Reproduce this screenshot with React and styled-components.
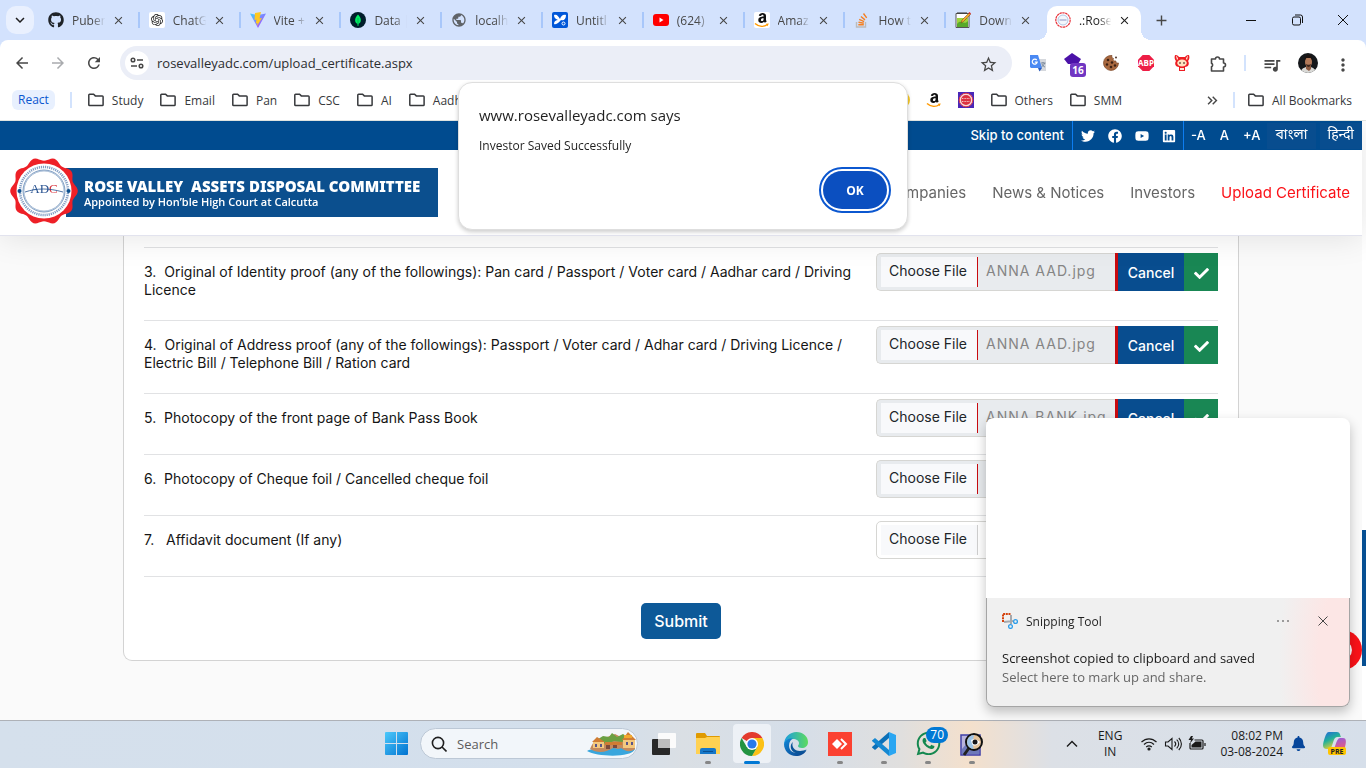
import React from "react";
import styled, { createGlobalStyle, css } from "styled-components";
import { FaGithub, FaTwitter, FaFacebook, FaYoutube, FaLinkedin, FaWhatsapp, FaCheck, FaBell } from "react-icons/fa";
import { SiOpenai } from "react-icons/si";
import { MdArrowBack, MdArrowForward, MdRefresh, MdStarBorder, MdQueueMusic, MdMoreVert, MdPublic, MdClose, MdAdd, MdKeyboardArrowDown, MdOutlineKeyboardDoubleArrowRight } from "react-icons/md";

const uiFont = '"Open Sans", "Noto Sans", sans-serif';
const siteFont = 'Inter, "Open Sans", "Noto Sans", sans-serif';

const GlobalStyle = createGlobalStyle`
  *, *::before, *::after { box-sizing: border-box; }
  body { margin: 0; overflow: hidden; font-family: ${uiFont}; font-size: 12px; color: #1f1f1f; }
  button { border: 0; padding: 0; background: none; font: inherit; color: inherit; }
  button, label, a { cursor: pointer; }
  a { color: inherit; text-decoration: none; }
  h1, h2, p { margin: 0; font-weight: 400; }
  svg { display: block; flex: none; }
`;

const Screen = styled.div`
  position: relative;
  height: 100vh;
  display: grid;
  grid-template-rows: 40px 46px 35px minmax(0, 1fr) 48px;
  background: #d3e2fd;
`;

/* Browser chrome */
const TabStrip = styled.header`
  display: flex;
  align-items: flex-end;
`;
const TabSearch = styled.button`
  width: 28px;
  height: 28px;
  margin: 0 0 6px 6px;
  border-radius: 10px;
  background: #e9f0fe;
  display: grid;
  place-items: center;
`;
const TabList = styled.nav`
  display: flex;
  flex: 0 1 1108px;
  min-width: 0;
  margin-left: 5px;
  height: 34px;
`;
const Tab = styled.div`
  position: relative;
  flex: 1 1 0;
  min-width: 0;
  display: flex;
  align-items: center;
  padding: 0 15px 6px 9px;
  color: #474747;
  ${(p) => p.$active ? css`
    background: #fff;
    color: #1f1f1f;
    border-radius: 10px 10px 0 0;
    flex: 0 0 94px;
    margin: 0 6px 0 0;
    padding: 0 10px 6px 8px;
    &::before, &::after {
      content: "";
      position: absolute;
      bottom: 0;
      width: 10px;
      height: 10px;
    }
    &::before { left: -10px; background: radial-gradient(circle at 0 0, transparent 10px, #fff 10px); }
    &::after { right: -10px; background: radial-gradient(circle at 100% 0, transparent 10px, #fff 10px); }
  ` : css`
    &::after {
      content: "";
      position: absolute;
      right: 0;
      top: 6px;
      width: 2px;
      height: 16px;
      background: ${p.$last ? "transparent" : "#a8c7fa"};
    }
  `}
`;
const TabTitle = styled.span`
  flex: 1;
  min-width: 0;
  margin: 0 6px 0 8px;
  white-space: nowrap;
  mask-image: linear-gradient(90deg, #000 60%, transparent 98%);
`;
const IconButton = styled.button`
  display: grid;
  place-items: center;
  min-width: ${(p) => p.$w || 16}px;
  height: ${(p) => p.$h || 16}px;
  color: ${(p) => p.$color || "#474747"};
`;
const NewTab = styled(IconButton)`
  margin: 0 0 6px 6px;
`;
const WindowButtons = styled.div`
  display: flex;
  margin-left: auto;
`;

const Toolbar = styled.div`
  display: flex;
  align-items: center;
  padding: 0 6px 0 4px;
  border-radius: 8px 8px 0 0;
  background: #fff;
`;
const AddressBar = styled.form`
  flex: 1;
  display: flex;
  align-items: center;
  height: 34px;
  margin: 0 8px;
  padding: 0 14px 0 5px;
  border-radius: 17px;
  background: #ebeef7;
`;
const SiteInfo = styled(IconButton)`
  border-radius: 50%;
  background: #fff;
`;
const AddressInput = styled.input`
  flex: 1;
  min-width: 0;
  margin: 0 8px;
  padding: 0;
  border: 0;
  outline: 0;
  background: none;
  font: 13px ${uiFont};
  color: #2b2d30;
`;
const Extensions = styled.div`
  display: flex;
  align-items: center;
`;
const Divider = styled.span`
  width: 2px;
  height: 16px;
  margin: ${(p) => p.$m};
  background: #d3e3fd;
`;
const Avatar = styled.span`
  width: 20px;
  height: 20px;
  border-radius: 50%;
  overflow: hidden;
`;

const BookmarkBar = styled.nav`
  display: flex;
  align-items: center;
  padding: 0 14px 6px 12px;
  background: #fff;
  border-bottom: 1px solid #dfe3e0;
  height: 35px;
`;
const Bookmark = styled.a`
  display: flex;
  align-items: center;
  gap: 7px;
  margin-right: ${(p) => p.$gap ?? 16}px;
  white-space: nowrap;
  color: #37393c;
`;
const BookmarkGroup = styled.a`
  padding: 1px 6px 2px;
  border-radius: 6px;
  background: #e8f0fe;
  color: #0b57d0;
`;
const BookmarkEnd = styled.div`
  display: flex;
  align-items: center;
  margin-left: auto;
`;

/* Website */
const Viewport = styled.main`
  display: flex;
  min-height: 0;
  overflow: hidden;
  background: #fafafa;
  font-family: ${siteFont};
`;
const Site = styled.div`
  position: relative;
  flex: 1;
  min-width: 0;
`;
const ScrollTrack = styled.div`
  display: grid;
  grid-template-rows: 409fr 136fr 54fr;
  width: 4px;
  background: #fff;
`;
const ScrollThumb = styled.div`
  grid-row: 2;
  background: #064f92;
`;
const SiteHeader = styled.header`
  position: relative;
  z-index: 1;
  background: #fff;
  border-bottom: 1px solid #e2e3ee;
  box-shadow: 0 2px 30px rgba(0, 0, 0, 0.1);
`;
const TopBar = styled.div`
  display: flex;
  justify-content: flex-end;
  align-items: stretch;
  height: 29px;
  background: #004b8f;
  color: #fff;
  font-size: 13px;
  font-weight: 500;
  line-height: 27px;
`;
const TopGroup = styled.div`
  display: flex;
  align-items: center;
  gap: ${(p) => p.$gap}px;
  padding: ${(p) => p.$pad};
  border-left: ${(p) => (p.$line ? "1px solid #0d7df0" : "0")};
`;
const Language = styled.a`
  padding: 0 8px;
  line-height: 26px;
  font-size: 14px;
  font-weight: 400;
  font-family: "Noto Sans Devanagari", "Noto Sans Bengali", "Noto Sans", sans-serif;
  background: #084d8f;
`;
const MainNav = styled.nav`
  display: flex;
  align-items: center;
  justify-content: space-between;
  height: 85px;
  padding: 0 12px 0 10px;
`;
const Brand = styled.a`
  display: flex;
  align-items: center;
`;
const BrandBanner = styled.span`
  display: flex;
  flex-direction: column;
  justify-content: center;
  width: 372px;
  height: 49px;
  margin-left: -12px;
  padding-left: 18px;
  background: #0b4f8e;
  color: #fff;
  white-space: pre;
`;
const BrandTitle = styled.strong`
  font: 900 15px/18px "Noto Sans", sans-serif;
`;
const BrandSub = styled.span`
  font: 600 11px/14px "Open Sans", sans-serif;
`;
const Seal = styled.svg`
  position: relative;
  overflow: visible;
`;
const NavLinks = styled.div`
  display: flex;
  gap: 26px;
  padding-bottom: 1px;
  font-size: 15px;
  color: #666;
  white-space: nowrap;
`;
const NavLink = styled.a`
  color: ${(p) => (p.$active ? "#fb1218" : "inherit")};
`;

const Card = styled.form`
  margin: 0 123px;
  padding: 11px 20px 21px;
  border: 1px solid #d3d3d3;
  border-top: 0;
  border-radius: 0 0 9px 9px;
  background: #fff;
`;
const DocRow = styled.div`
  display: grid;
  grid-template-columns: minmax(0, 1fr) 342px;
  column-gap: 16px;
  align-items: start;
  min-height: 61px;
  border-top: 1px solid #e1e2e4;
`;
const DocLabel = styled.label`
  padding: 15px 0 21px;
  font-size: 14px;
  line-height: 18px;
  color: #151515;
  white-space: pre-wrap;
`;
const Upload = styled.div`
  display: flex;
  height: 38px;
  margin-top: 5px;
`;
const FileField = styled.label`
  position: relative;
  display: flex;
  flex: 1;
  min-width: 0;
  padding: 3px 4px;
  border: 1px solid #d6d6d3;
  border-right: ${(p) => (p.$filled ? "0" : "1px solid #d6d6d3")};
  border-radius: 5px ${(p) => (p.$filled ? "0 0" : "5px 5px")} 5px;
  background: ${(p) => (p.$filled ? "#e8ebee" : "#fff")};
  font-size: 14px;
  line-height: 28px;
`;
const HiddenFile = styled.input`
  position: absolute;
  inset: 0;
  width: 100%;
  opacity: 0;
`;
const FileButton = styled.span`
  width: 97px;
  padding-left: 8px;
  border-right: 1px solid ${(p) => (p.$filled ? "#c90b10" : "#d0d0d0")};
  background: #f8f9fb;
  color: #212529;
`;
const FileName = styled.span`
  padding-left: 8px;
  color: #858585;
  letter-spacing: 1px;
`;
const CancelButton = styled.button`
  width: 69px;
  border-left: 3px solid #c90b10;
  background: #084d8f;
  color: #fff;
  font-size: 14px;
  font-weight: 500;
`;
const Done = styled.span`
  display: grid;
  place-items: center;
  width: 34px;
  padding-top: 2px;
  background: #198754;
  color: #fff;
`;
const SubmitArea = styled.div`
  display: flex;
  justify-content: center;
  padding-top: 26px;
  border-top: 1px solid #e1e2e4;
`;
const Submit = styled.button`
  width: 80px;
  height: 36px;
  border-radius: 5px;
  background: #0d5998;
  color: #fff;
  font-size: 16px;
  font-weight: 500;
`;
const BackToTop = styled.button`
  position: absolute;
  right: 0;
  bottom: 50px;
  width: 40px;
  height: 40px;
  border-radius: 50%;
  background: #fb1218;
  color: #fff;
  display: grid;
  place-items: center;
`;

/* Overlays */
const AlertBox = styled.section`
  position: absolute;
  z-index: 3;
  top: 82px;
  left: 50%;
  width: 450px;
  height: 148px;
  margin-left: -225px;
  padding: 21px 17px 17px 20px;
  border: 1px solid #dedede;
  border-radius: 14px;
  background: #fff;
  box-shadow: 0 2px 4px rgba(0, 0, 0, 0.2);
  display: flex;
  flex-direction: column;
`;
const AlertTitle = styled.h2`
  font-size: 15px;
  font-weight: 500;
  line-height: 22px;
`;
const AlertText = styled.p`
  margin-top: 11px;
  line-height: 18px;
`;
const OkButton = styled.button`
  align-self: flex-end;
  width: 64px;
  height: 38px;
  margin: 16px 3px 0 0;
  border-radius: 19px;
  background: #0b4fc0;
  color: #fff;
  font-weight: 700;
  outline: 2px solid #0b57d0;
  outline-offset: 2px;
`;
const Toast = styled.aside`
  position: absolute;
  z-index: 3;
  right: 16px;
  bottom: 61px;
  width: 364px;
  border-radius: 8px;
  background: #fff;
  box-shadow: 0 5px 12px rgba(0, 0, 0, 0.24);
`;
const ToastPreview = styled.div`
  height: 180px;
`;
const ToastBody = styled.div`
  height: 109px;
  padding: 13px 15px;
  border: 1px solid #a5a5a5;
  border-top: 0;
  border-radius: 0 0 8px 8px;
  background: radial-gradient(ellipse 70px 180px at 100% 60%, #fce6e5 45%, #f0f0f0 100%);
`;
const ToastHead = styled.div`
  display: flex;
  align-items: center;
  gap: 8px;
  height: 20px;
  margin-bottom: 18px;
`;
const ToastActions = styled.div`
  display: flex;
  gap: 24px;
  margin-left: auto;
  padding-right: 3px;
`;
const ToastText = styled.p`
  font-size: 13px;
  line-height: 19px;
  color: ${(p) => (p.$muted ? "#666" : "#1b1b1b")};
`;

/* Taskbar */
const Taskbar = styled.footer`
  position: relative;
  z-index: 2;
  display: grid;
  grid-template-columns: 1fr auto 1fr;
  align-items: center;
  padding-bottom: 2px;
  border-top: 1px solid #aeb1b7;
  background: linear-gradient(90deg, #d5e0ec 0%, #d3dfec 44%, #dadfe4 50%, #d5dee9 58%, #e0dfde 66%, #f4e0cc 71%, #dce0e6 77%, #d6dfea 100%);
`;
const Apps = styled.div`
  grid-column: 2;
  display: flex;
  align-items: center;
`;
const AppButton = styled.button`
  position: relative;
  width: ${(p) => (p.$start ? 48 : 44)}px;
  height: 45px;
  display: grid;
  place-items: center;
  ${(p) => p.$state && css`
    &::after {
      content: "";
      position: absolute;
      z-index: 1;
      bottom: 2px;
      width: ${p.$state === "active" ? 16 : 6}px;
      height: 3px;
      border-radius: 2px;
      background: ${p.$state === "active" ? "#0078d4" : "#868686"};
    }
  `}
  ${(p) => p.$state === "active" && css`
    &::before {
      content: "";
      position: absolute;
      inset: 3px;
      border-radius: 4px;
      background: #edf1f6;
    }
  `}
  svg { position: relative; z-index: 1; }
`;
const Count = styled.span`
  position: absolute;
  z-index: 2;
  top: 6px;
  right: 2px;
  padding: 0 4px;
  border-radius: 8px;
  background: #0078d4;
  color: #fff;
  line-height: 16px;
`;
const SearchBox = styled.label`
  display: flex;
  align-items: center;
  width: 218px;
  height: 31px;
  margin-right: 4px;
  padding: 0 0 0 10px;
  border: 1px solid #bcc8d6;
  border-radius: 16px;
  background: #f2f6fa;
`;
const SearchInput = styled.input`
  flex: 1;
  min-width: 0;
  margin-left: 10px;
  padding: 0;
  border: 0;
  outline: 0;
  background: none;
  font: 13px ${uiFont};
  &::placeholder { color: #5c5c5c; opacity: 1; }
`;
const Tray = styled.div`
  grid-column: 3;
  display: flex;
  align-items: center;
  justify-content: flex-end;
  padding-right: 18px;
  line-height: 16px;
  color: #1a1a1a;
`;
const TrayText = styled.div`
  text-align: ${(p) => p.$align};
  margin: ${(p) => p.$m};
`;
const TrayIcons = styled.div`
  display: flex;
  align-items: center;
  gap: 6px;
`;

const Stroke = ({ size = 16, width = 1, children, box = 16 }) => (
  <svg width={size} height={size} viewBox={`0 0 ${box} ${box}`} fill="none" stroke="currentColor" strokeWidth={width}>{children}</svg>
);

const ViteLogo = () => (
  <svg width="16" height="16" viewBox="0 0 16 16">
    <defs><linearGradient id="vite" x2="1" y2="1"><stop stopColor="#41d1ff" /><stop offset="1" stopColor="#bd34fe" /></linearGradient></defs>
    <path d="M0 1.500 8 16 16 1.500 8 3z" fill="url(#vite)" /><path d="m11 0-6 1-.5 7 2-.5-.7 4 1.600-.6-.4 3L12 6l-2.500.5L11 0z" fill="#ffc920" />
  </svg>
);
const MongoLogo = () => (
  <svg width="16" height="16" viewBox="0 0 16 16"><circle cx="8" cy="8" r="8" fill="#001e2b" /><path d="M8 2.500c4 4 3.500 8 .4 9.500V14h-.8v-2C4.500 10.500 4 6.500 8 2.500z" fill="#00ed64" /><path d="M8 6v7" stroke="#00a84d" strokeWidth=".8" /></svg>
);
const OpenAiLogo = () => (
  <svg width="16" height="16" viewBox="0 0 16 16"><rect width="16" height="16" rx="2" fill="#fff" /><g transform="translate(2 2)" color="#222"><SiOpenai size={12} /></g></svg>
);
const SketchLogo = () => (
  <svg width="16" height="16" viewBox="0 0 16 16"><rect width="16" height="16" rx="2" fill="#0057d9" /><path d="M2 3c3-1 4 1 6 4 1-3 3-5 6-4 0 4-2 6-5 5-2 2-4 5-7 4 0-3 2-4 4-4C3 7 2 5 2 3z" fill="#fff" /><circle cx="11.500" cy="11.500" r="1.500" fill="none" stroke="#fff" /></svg>
);
const AmazonLogo = ({ plate }) => (
  <svg width="16" height="16" viewBox="0 0 16 16">{plate && <rect width="16" height="16" rx="2" fill="#fff" />}<path d="M9.600 4.600V4c0-1.700-2.300-1.500-2.500 0L4.800 3.800C5.200.2 12 0 12 3.800v3.900c0 .8.500 1.200.8 1.600L11 10.800c-.5-.4-.8-.8-1-1.100C8 11.800 4.300 11 4.300 8.200c0-2.900 2.800-3.500 5.300-3.600zm0 1.700c-1.500 0-2.700.4-2.700 1.700 0 1.700 2.700 1.400 2.700-.8z" fill="#111" /><path d="M1 11.500c4 3.500 9 3.500 12.500 1" stroke="#f90" strokeWidth="1.500" fill="none" /><path d="m12 11.800 2.800-.3-1.300 2.700z" fill="#f90" /></svg>
);
const YoutubeTabLogo = () => (
  <svg width="16" height="16" viewBox="0 0 16 16"><rect y="2" width="16" height="12" rx="3" fill="red" /><path d="m6.500 5.500 4 2.500-4 2.500z" fill="#fff" /></svg>
);
const StackLogo = () => (
  <svg width="16" height="16" viewBox="0 0 16 16" fill="none"><path d="M2.500 10v5h9v-5" stroke="#bcbbbb" strokeWidth="1.400" /><path d="M4.300 12.800h5.500M4.500 10.200l5.300 1M5.200 7.300l4.900 2.300M6.900 4.500l4.100 3.400M9.500 1.500l3.200 4.400" stroke="#f48024" strokeWidth="1.400" /></svg>
);
const NoteLogo = () => (
  <svg width="16" height="16" viewBox="0 0 16 16"><path d="M1 1.500h13v14H1z" fill="#fff" stroke="#555" /><path d="M2 6h11v9H2z" fill="#9ed53b" /><path d="M2 12c4-6 7 2 11-3v6H2z" fill="#58a92b" /><path d="M2.500 1h10" stroke="#333" strokeWidth="2" strokeDasharray="1 1" /><path d="m6 11 1-3 7-7 1.500 1.500-7 7z" fill="#f2a92c" stroke="#6b4217" strokeWidth=".5" /><path d="m13.500 1 1-1L16 1.500l-1 1z" fill="#d22" /></svg>
);
const RoseTabLogo = () => (
  <svg width="16" height="16" viewBox="0 0 16 16"><circle cx="8" cy="8" r="7.200" fill="#fff" stroke="#e8323a" strokeWidth="1.200" strokeDasharray="2.500 .5" /><circle cx="8" cy="8" r="5" fill="#f4f7fc" stroke="#9db9dd" strokeWidth=".8" /><path d="M4.500 8h7" stroke="#8a94c4" /></svg>
);

const tabs = [
  { title: "Puber", icon: <FaGithub size={16} color="#1f2328" /> },
  { title: "ChatG", icon: <OpenAiLogo /> },
  { title: "Vite +", icon: <ViteLogo /> },
  { title: "Data |", icon: <MongoLogo /> },
  { title: "localh", icon: <MdPublic size={16} color="#5f6368" /> },
  { title: "Untitl", icon: <SketchLogo /> },
  { title: "(624)", icon: <YoutubeTabLogo /> },
  { title: "Amaz", icon: <AmazonLogo plate /> },
  { title: "How t", icon: <StackLogo /> },
  { title: "Down", icon: <NoteLogo /> },
  { title: ".:Rose", icon: <RoseTabLogo />, active: true },
];

const folders = ["Study", "Email", "Pan", "CSC", "AI", "Aadh"];

const Folder = () => (
  <Stroke size={18} box={18} width={1.5}><path d="M1.800 4c0-.5.300-.8.800-.8h4l1.700 1.700h7c.5 0 .8.300.8.800v8c0 .5-.3.800-.8.800H2.600c-.5 0-.8-.3-.8-.8z" /></Stroke>
);

const PuzzleIcon = () => (
  <Stroke size={18} box={18} width={1.600}><path d="M2.500 4h4a2 2 0 0 1 4 0h4v4a2 2 0 0 1 0 4v4h-12v-4.200a2 2 0 0 0 0-3.600z" strokeLinejoin="round" /></Stroke>
);

/* Ten shallow petals: the outline's radius swings between a crest and a dip. */
const sealOutline = Array.from({ length: 120 }, (_, i) => {
  const a = (i * Math.PI) / 60;
  const r = 32 + 1.800 * Math.cos(10 * a);
  return `${(34 + r * Math.cos(a)).toFixed(2)},${(33 + r * Math.sin(a)).toFixed(2)}`;
}).join(" ");

const SealBadge = () => (
  <Seal width="68" height="66" viewBox="0 2 68 66">
    <polygon points={sealOutline} fill="#ee2027" />
    <circle cx="34" cy="33" r="27.500" fill="#fff" />
    <circle cx="34" cy="33" r="24" fill="none" stroke="#4d75ab" strokeWidth="2.500" strokeDasharray="1.200 .9" opacity=".7" />
    <circle cx="34" cy="33" r="21" fill="none" stroke="#2e609c" strokeWidth=".6" />
    <circle cx="34" cy="33" r="20" fill="none" stroke="#2e609c" strokeWidth=".4" />
    <circle cx="9.500" cy="33" r="2" fill="#0b4f8e" /><circle cx="58.500" cy="33" r="2" fill="#0b4f8e" />
    <text x="34" y="35" textAnchor="middle" fontFamily="Liberation Serif, serif" fontSize="13" fill="#2b5492">AD<tspan fill="#d8333c">C</tspan></text>
    <path d="M15 34c12-4 24-4 38 0" fill="none" stroke="#204f8e" strokeWidth=".8" />
  </Seal>
);

const docs = [
  { id: "identity", label: "3.  Original of Identity proof (any of the followings): Pan card / Passport / Voter card / Aadhar card / Driving Licence", file: "ANNA AAD.jpg" },
  { id: "address", label: "4.  Original of Address proof (any of the followings): Passport / Voter card / Adhar card / Driving Licence / Electric Bill / Telephone Bill / Ration card", file: "ANNA AAD.jpg" },
  { id: "passbook", label: "5.  Photocopy of the front page of Bank Pass Book", file: "ANNA BANK.jpg" },
  { id: "cheque", label: "6.  Photocopy of Cheque foil / Cancelled cheque foil", file: "ANNA BANK.jpg" },
  { id: "affidavit", label: "7.   Affidavit document (If any)" },
];

function DocumentRow({ id, label, file }) {
  return (
    <DocRow>
      <DocLabel htmlFor={id}>{label}</DocLabel>
      <Upload>
        <FileField $filled={!!file}>
          <FileButton $filled={!!file}>Choose File</FileButton>
          {file && <FileName>{file}</FileName>}
          <HiddenFile id={id} type="file" disabled={!!file} />
        </FileField>
        {file && <CancelButton type="button">Cancel</CancelButton>}
        {file && <Done><FaCheck size={15} /></Done>}
      </Upload>
    </DocRow>
  );
}

const TranslateIcon = () => (
  <svg width="17" height="17" viewBox="0 0 17 17"><path d="M7 4h9v12H9z" fill="#d5d8dd" /><path d="M0 0h8l4 13H1L0 12z" fill="#4a89f3" /><path d="m8 13 4 0-2.500 3.500z" fill="#2a5cc0" /><path d="M6.800 5.200A2.500 2.500 0 1 0 7.200 7.200H4.800" fill="none" stroke="#fff" strokeWidth="1.200" /><path d="M11 8h4.500M13 7v1m1.500 0c-.5 2-2 3.500-3 4m.5-3c.5 1.500 1.500 2.500 3 3" stroke="#66778c" fill="none" strokeWidth=".8" /></svg>
);
const PurpleIcon = () => (
  <svg width="24" height="24" viewBox="0 0 24 24"><path d="m9 0 9 6-3 5H5L1 6z" fill="#4b12a8" /><rect x="7" y="10" width="16" height="14" rx="3" fill="#7036c2" /><text x="15" y="21" textAnchor="middle" fill="#fff" fontFamily="Open Sans, sans-serif" fontSize="10" fontWeight="700">16</text></svg>
);
const CookieIcon = () => (
  <svg width="16" height="16" viewBox="0 0 16 16"><path d="M9 .5A7.500 7.500 0 1 0 15.500 8c-2 .4-3-.7-2.500-2-2 .5-3.500-1-2.500-2.500C9 3 8.500 2 9 .5z" fill="#a8683f" stroke="#7a4525" strokeWidth=".7" /><g fill="#3d2114"><circle cx="5" cy="5" r="1.300" /><circle cx="9" cy="7.500" r="1.300" /><circle cx="4" cy="9.500" r="1.200" /><circle cx="8" cy="12" r="1.300" /><circle cx="12" cy="10.500" r="1.200" /><circle cx="13" cy="2.500" r=".9" /></g></svg>
);
const AbpIcon = () => (
  <svg width="16" height="16" viewBox="0 0 16 16"><path d="M4.700 0h6.600L16 4.700v6.600L11.300 16H4.700L0 11.300V4.700z" fill="#ed1e45" /><text x="8" y="11" textAnchor="middle" fill="#fff" fontFamily="Open Sans, sans-serif" fontSize="8" fontWeight="700">ABP</text></svg>
);
const FoxIcon = () => (
  <svg width="16" height="16" viewBox="0 0 16 16"><path d="M1 0c3 0 4 2 4 2h6s1-2 4-2c1 3 0 5-1 6 2 3 0 6-3 6v4H5v-4C2 12 0 9 2 6 1 5 0 3 1 0z" fill="#ee1c22" /><ellipse cx="8" cy="8" rx="4.800" ry="3.500" fill="#ffe2c0" /><path d="M2 1c1 0 2 2 2 3L3 5zm12 0c-1 0-2 2-2 3l1 1zM6 13h4v2H6z" fill="#fdebd8" /><path d="M6 7v2m4-2v2" stroke="#351b12" /></svg>
);
const CoinIcon = () => (
  <svg width="16" height="16" viewBox="0 0 16 16"><circle cx="8" cy="8" r="8" fill="#f7c928" /></svg>
);
const TrainIcon = () => (
  <svg width="16" height="16" viewBox="0 0 16 16"><rect width="16" height="16" fill="#4a27b8" /><circle cx="8" cy="8" r="6.800" fill="#f4d9d9" stroke="#e23844" /><circle cx="8" cy="8" r="5" fill="#dc3341" /><path d="M4 6.500h8M4 9.500h8" stroke="#f4bfc2" strokeDasharray="1 .6" /></svg>
);
const Portrait = () => (
  <svg width="20" height="20" viewBox="0 0 20 20"><rect width="20" height="20" fill="#15181b" /><path d="M3 20c0-5 3-5 5-6h5c2 1 5 2 5 6z" fill="#d9d9d6" /><path d="M8 12h5v4l-2 2-3-2z" fill="#8d5b42" /><ellipse cx="10.500" cy="9" rx="3.500" ry="5" fill="#b27a5a" /><path d="M6.500 8C6 3 9 2 11 2s4 2 3.500 6L13 5H8z" fill="#1b1210" /><path d="M8 11c1 1 4 1 5 0-.5 4-4.500 4-5 0z" fill="#3e261c" /></svg>
);

const SnipIcon = () => (
  <svg width="16" height="16" viewBox="0 0 16 16" fill="none"><path d="M9 2v9M2 9l9-1" stroke="#a5a9ae" strokeWidth="2" /><path d="M1 9V1h8" stroke="#d4420d" strokeWidth="2" strokeDasharray="2 .7" /><circle cx="8.500" cy="13.500" r="1.900" stroke="#2b9be8" strokeWidth="1.300" /><circle cx="13.500" cy="8.500" r="1.900" stroke="#2b9be8" strokeWidth="1.300" /></svg>
);
const StartLogo = () => (
  <svg width="23" height="23" viewBox="0 0 23 23"><defs><linearGradient id="win" x2="1" y2="1" gradientUnits="objectBoundingBox"><stop stopColor="#4cc9fb" /><stop offset="1" stopColor="#0072d0" /></linearGradient></defs><path d="M1 0h10v11H0V1a1 1 0 0 1 1-1zm11 0h10a1 1 0 0 1 1 1v10H12zM0 12h11v11H1a1 1 0 0 1-1-1zm12 0h11v10a1 1 0 0 1-1 1H12z" fill="url(#win)" /></svg>
);
const VillageArt = () => (
  <svg width="50" height="25" viewBox="0 0 50 25"><path d="M0 20c6-4 42-6 48-2-3 9-38 8-48 2z" fill="#39a6dd" /><path d="M3 18c2-5 4-8 7-9l10-3 8-3 10 5 10 1v9c-5 4-10 2-14-1-4 2-4 0-8 0-6 4-15 6-23 1z" fill="#c48a5e" /><path d="m8 10 8-5 6 1 3-4 5 4 6-3 6 4-7 4-8-1-7 3z" fill="#6aa043" /><path d="M6 11h11v6H6zm30-2h12v8H36z" fill="#f4c87e" /><path d="m5 11 5-5 8 5zM18 11h17v3H18zm17-2 6-8 8 8z" fill="#d07c33" /><path d="M19 14h4v4h-4zm7 0h4v3h-4z" fill="#7d4a3c" /><path d="M8 13h2v3H8zm5 0h2v3h-2zm26-2h2v3h-2zm5 0h2v3h-2z" fill="#5a5688" /><path d="M37 7h8V4h-8z" fill="#f1a92f" /></svg>
);
const TaskViewIcon = () => (
  <svg width="24" height="23" viewBox="0 0 24 23"><rect y="7" width="18" height="16" rx="1" fill="#282828" /><rect x="6" y="1" width="18" height="15" rx="1" fill="#fbfbfb" /><path d="M6 7h12v9H6z" fill="#bdbdbd" /></svg>
);
const ExplorerIcon = () => (
  <svg width="24" height="22" viewBox="0 0 24 22"><path d="M0 1a1 1 0 0 1 1-1h8l2 3h12a1 1 0 0 1 1 1v6H0z" fill="#e09a00" /><path d="M0 5h9l2-1h13v17H0z" fill="#ffd152" /><path d="M4 21v-4a2 2 0 0 1 2-2h12a2 2 0 0 1 2 2v4z" fill="#1677c8" /><path d="M7 18.500h10" stroke="#0a4f91" /></svg>
);
const ChromeIcon = () => (
  <svg width="24" height="24" viewBox="0 0 24 24"><path d="M12 12 1.600 6A12 12 0 0 1 22.400 6z" fill="#e33b2e" /><path d="M22.400 6A12 12 0 0 1 12 24l5.200-9L12 6z" fill="#fbc116" /><path d="M1.600 6A12 12 0 0 0 12 24l5.200-9H6.800z" fill="#229342" /><circle cx="12" cy="12" r="6" fill="#fff" /><circle cx="12" cy="12" r="4.600" fill="#2779ea" /></svg>
);
const EdgeIcon = () => (
  <svg width="24" height="24" viewBox="0 0 24 24"><defs><linearGradient id="edgeTop" x2="1"><stop stopColor="#1b9de2" /><stop offset="1" stopColor="#5ddb5e" /></linearGradient><linearGradient id="edgeLow" x2="1" y2="1"><stop stopColor="#1288d8" /><stop offset="1" stopColor="#0a3f88" /></linearGradient></defs><path d="M0 13C0 5 6 0 12.500 0 19 0 24 4.500 24 10c0 4-3 6-6 6-2.500 0-4-1-4-2 0-.8 1-1 1-3 0-2-2.500-4-6-4-5 0-8.500 3-9 6z" fill="url(#edgeTop)" /><path d="M0 12c1-4 5-6 9-5.500-2 1-4 3.500-4 7C5 20 11 22 17 20.500c3-.8 4.500-2 5.500-2.500-2 4-6 6-10.500 6C5 24 0 18.500 0 12z" fill="url(#edgeLow)" /><path d="M9 10c-2 4 1 9 7 9 2.500 0 5-1 6.500-1.500C20 22 13 23 9 19.500c-3-2.500-3-7.500 0-9.500z" fill="#0a5398" /></svg>
);
const AnyDeskIcon = () => (
  <svg width="24" height="24" viewBox="0 0 24 24"><rect width="24" height="24" fill="#fb4131" /><path d="m4 12 5-5 5 5-5 5z" fill="#fff" /><path d="m13 7 5 5-5 5" fill="none" stroke="#fff" strokeWidth="2" /></svg>
);
const CodeIcon = () => (
  <svg width="24" height="24" viewBox="0 0 24 24"><path d="m17 0 7 3v18l-7 3z" fill="#2aa6f2" /><path d="M17 0v6L3 18l-3-2.500V15z" fill="#0b70b8" /><path d="M17 24v-6L3 6 0 8.500V9z" fill="#1488d2" /></svg>
);
const PhotoIcon = () => (
  <svg width="24" height="24" viewBox="0 0 24 24"><path d="M1 3h19v20H1z" fill="#b9b4dd" stroke="#3f3fa8" strokeWidth="1.500" /><path d="M2 17 9 9l10 9v4H2z" fill="#6e79ba" /><path d="m9 16-5 7" stroke="#222" strokeWidth="3" /><circle cx="14" cy="10" r="8" fill="#e6c49c" stroke="#111" strokeWidth="2" /><path d="M14 3a7 7 0 0 0 0 14c-3-4 2-6-1-9 0-2 1-3 1-5z" fill="#9fc4e6" /><path d="M11 8c3-2 7 0 9 2-2 3-6 5-8 2z" fill="#fff" /><circle cx="15" cy="10" r="2.500" fill="#17161a" /></svg>
);
const CopilotIcon = () => (
  <svg width="26" height="26" viewBox="0 0 26 26"><defs><linearGradient id="co1" x2=".5" y2="1"><stop stopColor="#2465dc" /><stop offset=".5" stopColor="#20b09b" /><stop offset="1" stopColor="#f5d32b" /></linearGradient><linearGradient id="co2" x2=".3" y2="1"><stop stopColor="#8c5ce7" /><stop offset="1" stopColor="#ec5c78" /></linearGradient></defs><path d="M7 1h8c3 0 3 3 4 5h-4c-4 0-4 10-7 12H5c-6 0-4-6-2-12 1-3 2-5 4-5z" fill="url(#co1)" /><path d="M18 7h3c4 0 3 5 2 9-1 3-2 4-5 4h-8c3 0 4-13 8-13z" fill="url(#co2)" /><rect x="6" y="16" width="18" height="8" rx="2" fill="#ffc400" /><text x="15" y="23" textAnchor="middle" fontFamily="Open Sans, sans-serif" fontSize="7" fontWeight="700" fill="#222">PRE</text></svg>
);

export default function App() {
  return (
    <Screen>
      <GlobalStyle />
      <TabStrip>
        <TabSearch aria-label="Search tabs"><MdKeyboardArrowDown size={18} /></TabSearch>
        <TabList>
          {tabs.map((t, i) => (
            <Tab key={t.title} $active={t.active} $last={i === tabs.length - 2}>
              {t.icon}
              <TabTitle>{t.title}</TabTitle>
              <IconButton aria-label="Close tab" $w={12} $color={t.active ? "#1f1f1f" : "#474747"}><MdClose size={13} /></IconButton>
            </Tab>
          ))}
        </TabList>
        <NewTab aria-label="New tab" $h={28}><MdAdd size={17} /></NewTab>
        <WindowButtons>
          <IconButton aria-label="Minimize" $w={46} $h={40} $color="#111"><Stroke><path d="M3 8.500h10" /></Stroke></IconButton>
          <IconButton aria-label="Restore" $w={46} $h={40} $color="#111"><Stroke><rect x="3.500" y="5" width="8" height="8" rx="1.500" /><path d="M6 3h5.500a2 2 0 0 1 2 2v6" /></Stroke></IconButton>
          <IconButton aria-label="Close" $w={46} $h={40} $color="#111"><Stroke><path d="m3 3 10 10M13 3 3 13" /></Stroke></IconButton>
        </WindowButtons>
      </TabStrip>

      <Toolbar>
        <IconButton aria-label="Back" $w={36} $h={34}><MdArrowBack size={18} /></IconButton>
        <IconButton aria-label="Forward" $w={36} $h={34} $color="#a9abae"><MdArrowForward size={18} /></IconButton>
        <IconButton aria-label="Reload" $w={36} $h={34}><MdRefresh size={18} /></IconButton>
        <AddressBar>
          <SiteInfo type="button" aria-label="Site information" $w={24} $h={24}>
            <Stroke width={1.5}><circle cx="4" cy="5" r="1.800" /><path d="M8 5h6M2 11h6" /><circle cx="12" cy="11" r="1.800" /></Stroke>
          </SiteInfo>
          <AddressInput aria-label="Address" defaultValue="rosevalleyadc.com/upload_certificate.aspx" />
          <IconButton type="button" aria-label="Bookmark this page" $w={18}><MdStarBorder size={19} /></IconButton>
        </AddressBar>
        <Extensions>
          <IconButton aria-label="Translate" $w={36}><TranslateIcon /></IconButton>
          <IconButton aria-label="Extension, 16 items" $w={38} $h={20}><PurpleIcon /></IconButton>
          <IconButton aria-label="Cookies" $w={34}><CookieIcon /></IconButton>
          <IconButton aria-label="Ad blocker" $w={36}><AbpIcon /></IconButton>
          <IconButton aria-label="Fox" $w={36}><FoxIcon /></IconButton>
          <IconButton aria-label="Extensions" $w={36}><PuzzleIcon /></IconButton>
          <Divider $m="0 8px 0 8px" />
          <IconButton aria-label="Media" $w={36}><MdQueueMusic size={20} /></IconButton>
          <IconButton aria-label="Profile" $w={36} $h={20}><Avatar><Portrait /></Avatar></IconButton>
          <IconButton aria-label="Menu" $w={34}><MdMoreVert size={20} /></IconButton>
        </Extensions>
      </Toolbar>

      <BookmarkBar>
        <BookmarkGroup href="#react">React</BookmarkGroup>
        <Divider $m="0 15px 0 15px" />
        {folders.map((f) => <Bookmark key={f} href={`#${f}`}><Folder />{f}</Bookmark>)}
        <BookmarkEnd>
          <Bookmark href="#coin" aria-label="Coin"><CoinIcon /></Bookmark>
          <Bookmark href="#amazon" aria-label="Amazon"><AmazonLogo /></Bookmark>
          <Bookmark href="#train" aria-label="Rail"><TrainIcon /></Bookmark>
          <Bookmark href="#others"><Folder />Others</Bookmark>
          <Bookmark href="#smm" $gap={81}><Folder />SMM</Bookmark>
          <IconButton aria-label="More bookmarks" $w={18}><MdOutlineKeyboardDoubleArrowRight size={17} /></IconButton>
          <Divider $m="0 12px 0 12px" />
          <Bookmark href="#all" $gap={0}><Folder />All Bookmarks</Bookmark>
        </BookmarkEnd>
      </BookmarkBar>

      <Viewport>
        <Site>
          <SiteHeader>
            <TopBar>
              <TopGroup $gap={0} $pad="0 8px 0 0"><a href="#content">Skip to content</a></TopGroup>
              <TopGroup $line $gap={13} $pad="0 7px 0 8px">
                <a href="#twitter" aria-label="Twitter"><FaTwitter size={14} /></a>
                <a href="#facebook" aria-label="Facebook"><FaFacebook size={14} /></a>
                <a href="#youtube" aria-label="YouTube"><FaYoutube size={14} /></a>
                <a href="#linkedin" aria-label="LinkedIn"><FaLinkedin size={14} /></a>
              </TopGroup>
              <TopGroup $line $gap={14} $pad="0 7px 0 7px">
                <a href="#smaller">-A</a><a href="#normal">A</a><a href="#larger">+A</a>
              </TopGroup>
              <TopGroup $gap={4} $pad="0">
                <Language href="#bn" lang="bn">বাংলা</Language>
                <Language href="#hi" lang="hi">हिन्दी</Language>
              </TopGroup>
            </TopBar>
            <MainNav>
              <Brand href="#home">
                <SealBadge />
                <BrandBanner>
                  <BrandTitle>ROSE VALLEY  ASSETS DISPOSAL COMMITTEE</BrandTitle>
                  <BrandSub>Appointed by Hon’ble High Court at Calcutta</BrandSub>
                </BrandBanner>
              </Brand>
              <NavLinks>
                <NavLink href="#companies">Companies</NavLink>
                <NavLink href="#news">News &amp; Notices</NavLink>
                <NavLink href="#investors">Investors</NavLink>
                <NavLink href="#upload" $active>Upload Certificate</NavLink>
              </NavLinks>
            </MainNav>
          </SiteHeader>
          <Card onSubmit={(e) => e.preventDefault()}>
            {docs.map((d) => <DocumentRow key={d.id} {...d} />)}
            <SubmitArea><Submit type="submit">Submit</Submit></SubmitArea>
          </Card>
          <BackToTop aria-label="Back to top"><Stroke size={24} width={1.300}><circle cx="8" cy="8" r="6" /></Stroke></BackToTop>
        </Site>
        <ScrollTrack><ScrollThumb /></ScrollTrack>
      </Viewport>

      <Taskbar>
        <Apps>
          <AppButton $start aria-label="Start"><StartLogo /></AppButton>
          <SearchBox>
            <Stroke width={1.6}><circle cx="7" cy="7" r="5.600" /><path d="m11 11 4.500 4.500" /></Stroke>
            <SearchInput aria-label="Search" placeholder="Search" />
            <VillageArt />
          </SearchBox>
          <AppButton aria-label="Task view"><TaskViewIcon /></AppButton>
          <AppButton aria-label="File Explorer" $state="open"><ExplorerIcon /></AppButton>
          <AppButton aria-label="Chrome" $state="active"><ChromeIcon /></AppButton>
          <AppButton aria-label="Edge"><EdgeIcon /></AppButton>
          <AppButton aria-label="AnyDesk" $state="open"><AnyDeskIcon /></AppButton>
          <AppButton aria-label="Code editor" $state="open"><CodeIcon /></AppButton>
          <AppButton aria-label="WhatsApp" $state="open"><FaWhatsapp size={27} color="#15884f" /><Count>70</Count></AppButton>
          <AppButton aria-label="Photo viewer" $state="open"><PhotoIcon /></AppButton>
        </Apps>
        <Tray>
          <IconButton aria-label="Hidden icons" $color="#1a1a1a"><Stroke width={1.4}><path d="m3 10.500 5-5 5 5" /></Stroke></IconButton>
          <TrayText $align="center" $m="0 18px">ENG<br />IN</TrayText>
          <TrayIcons>
            <Stroke size={18} box={18} width={1.2}><path d="M1.500 7c4.500-4.300 10.500-4.300 15 0M4 9.500c3-3 7-3 10 0M6.200 12c2-1.700 3.600-1.700 5.600 0" /><circle cx="9" cy="14" r="1" fill="currentColor" /></Stroke>
            <Stroke size={18} box={18} width={1.1}><path d="M1.500 7h2.500l4-3.500v11L4 11H1.500zM10.500 6.500c1.500 1.500 1.500 3.500 0 5M12.700 4.700c2.700 2.500 2.700 6 0 8.600M14.800 3c3.500 3.500 3.500 8.500 0 12" /></Stroke>
            <Stroke size={18} box={18} width={1.2}><path d="M6.500 5h7.500a1 1 0 0 1 1 1v7a1 1 0 0 1-1 1H3a1 1 0 0 1-1-1V8M17 8v3" /><path d="M7.500 6.500H13.500v6H3.500V10z" fill="currentColor" stroke="none" /><path d="M3 1 .5 5H3L2 8.500 6 3.500H3.800L5 1z" fill="currentColor" stroke="none" /></Stroke>
          </TrayIcons>
          <TrayText $align="right" $m="0 8px 0 14px">08:02 PM<br />03-08-2024</TrayText>
          <FaBell size={15} color="#06469b" />
          <TrayText $m="0 0 0 16px"><CopilotIcon /></TrayText>
        </Tray>
      </Taskbar>

      <AlertBox role="alertdialog" aria-labelledby="alert-title">
        <AlertTitle id="alert-title">www.rosevalleyadc.com says</AlertTitle>
        <AlertText>Investor Saved Successfully</AlertText>
        <OkButton>OK</OkButton>
      </AlertBox>

      <Toast>
        <ToastPreview />
        <ToastBody>
          <ToastHead>
            <SnipIcon />Snipping Tool
            <ToastActions>
              <IconButton aria-label="More options"><Stroke><path d="M2 8h2M7 8h2M12 8h2" /></Stroke></IconButton>
              <IconButton aria-label="Dismiss"><Stroke><path d="m3.500 3.500 9 9M12.500 3.500l-9 9" /></Stroke></IconButton>
            </ToastActions>
          </ToastHead>
          <ToastText>Screenshot copied to clipboard and saved</ToastText>
          <ToastText $muted>Select here to mark up and share.</ToastText>
        </ToastBody>
      </Toast>
    </Screen>
  );
}
